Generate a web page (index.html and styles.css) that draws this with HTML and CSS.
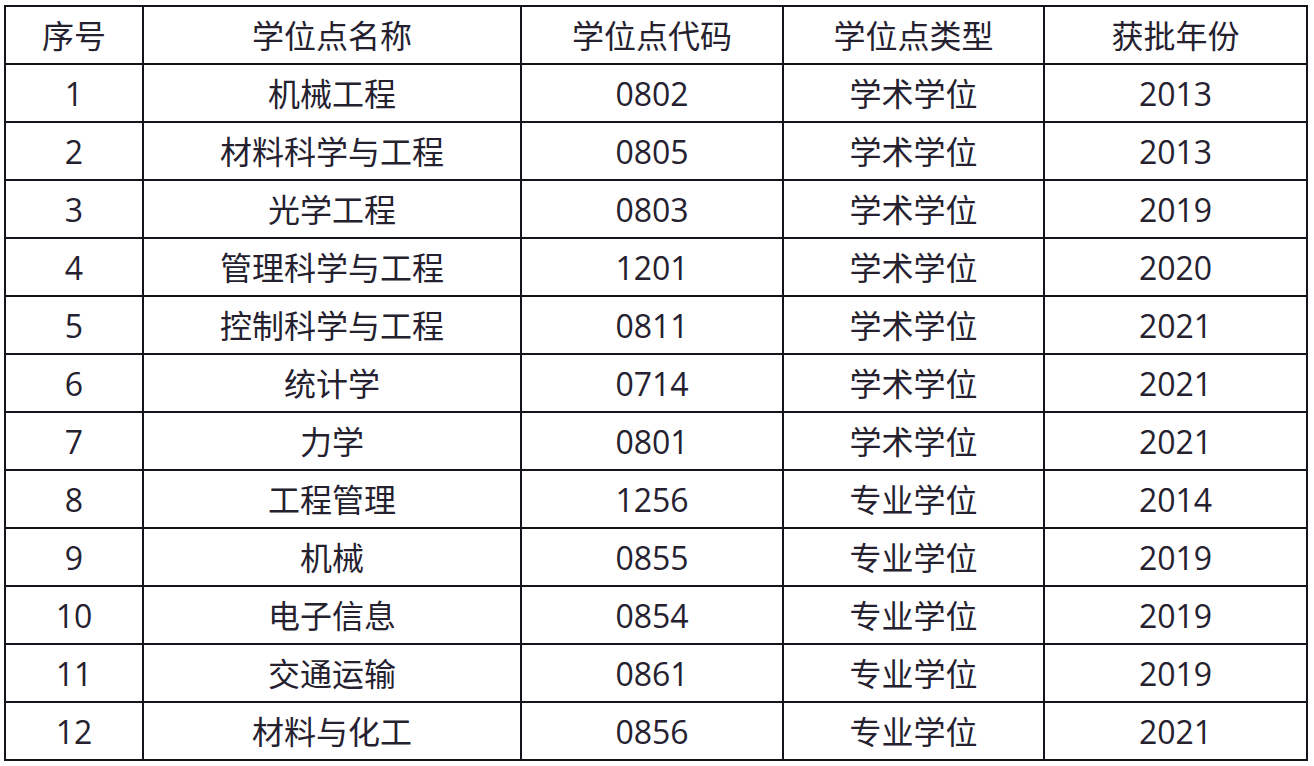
FILE: index.html
```html
<!DOCTYPE html>
<html lang="zh">
<head>
<meta charset="utf-8">
<title>学位点</title>
<link rel="stylesheet" href="styles.css">
</head>
<body>
<table class="deg">
<colgroup>
<col class="c1"><col class="c2"><col class="c3"><col class="c4"><col class="c5">
</colgroup>
<thead>
<tr><th>序号</th><th>学位点名称</th><th>学位点代码</th><th>学位点类型</th><th>获批年份</th></tr>
</thead>
<tbody>
<tr><td>1</td><td>机械工程</td><td>0802</td><td>学术学位</td><td>2013</td></tr>
<tr><td>2</td><td>材料科学与工程</td><td>0805</td><td>学术学位</td><td>2013</td></tr>
<tr><td>3</td><td>光学工程</td><td>0803</td><td>学术学位</td><td>2019</td></tr>
<tr><td>4</td><td>管理科学与工程</td><td>1201</td><td>学术学位</td><td>2020</td></tr>
<tr><td>5</td><td>控制科学与工程</td><td>0811</td><td>学术学位</td><td>2021</td></tr>
<tr><td>6</td><td>统计学</td><td>0714</td><td>学术学位</td><td>2021</td></tr>
<tr><td>7</td><td>力学</td><td>0801</td><td>学术学位</td><td>2021</td></tr>
<tr><td>8</td><td>工程管理</td><td>1256</td><td>专业学位</td><td>2014</td></tr>
<tr><td>9</td><td>机械</td><td>0855</td><td>专业学位</td><td>2019</td></tr>
<tr><td>10</td><td>电子信息</td><td>0854</td><td>专业学位</td><td>2019</td></tr>
<tr><td>11</td><td>交通运输</td><td>0861</td><td>专业学位</td><td>2019</td></tr>
<tr><td>12</td><td>材料与化工</td><td>0856</td><td>专业学位</td><td>2021</td></tr>
</tbody>
</table>
</body>
</html>
```
FILE: styles.css
```css
html, body {
  margin: 0;
  padding: 0;
  background: #ffffff;
}
body {
  padding: 5px 0 0 4px;
  font-family: "Open Sans", "Noto Sans CJK SC", sans-serif;
  color: #25212f;
}
.deg {
  border-collapse: collapse;
  table-layout: fixed;
  width: 1302px;
}
.c1 { width: 138px; }
.c2 { width: 378px; }
.c3 { width: 262px; }
.c4 { width: 261px; }
.c5 { width: 263px; }
.deg th, .deg td {
  border: 2px solid #15131c;
  height: 54px;
  padding: 2px 0 0 0;
  text-align: center;
  vertical-align: middle;
  font-size: 32px;
  font-weight: 400;
  line-height: 1;
  white-space: nowrap;
}
```
